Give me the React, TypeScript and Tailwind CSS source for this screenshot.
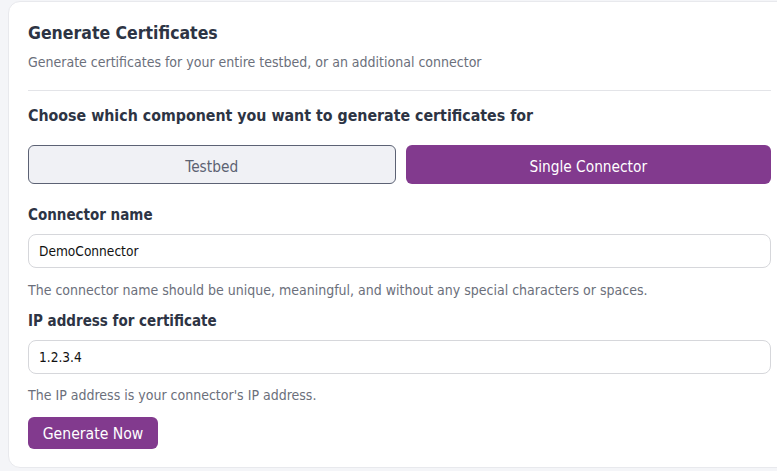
import React from "react";

const font = '"DejaVu Sans Condensed", "DejaVu Sans", sans-serif';

export default function App() {
  return (
    <div
      className="w-[777px] h-[471px] overflow-hidden bg-[#f4f5f8] pt-px pl-2"
      style={{ fontFamily: font }}
    >
      <div className="w-[783px] rounded-xl border border-[#e8e9ed] bg-white pl-[19px] pr-[19px] pt-[19px] pb-[18px] flex flex-col">
        <h1 className="text-[17.5px] leading-[24px] font-bold text-[#2d3444]">Generate Certificates</h1>
        <p className="mt-[7px] text-[14px] leading-[20px] text-[#6b6f7b]">
          Generate certificates for your entire testbed, or an additional connector
        </p>
        <div className="mt-[18px] h-px bg-[#e3e4e8]" />
        <h2 className="mt-[13px] text-[15.8px] leading-[24px] font-bold text-[#2d3444]">
          Choose which component you want to generate certificates for
        </h2>
        <div className="mt-[17px] flex gap-[10px]">
          <button className="flex-1 h-[39px] pt-[5px] flex items-center justify-center rounded-md border border-[#5c6274] bg-[#f0f1f5] text-[15.3px] text-[#5c6272]">
            Testbed
          </button>
          <button className="flex-1 h-[39px] pt-[5px] flex items-center justify-center rounded-md bg-[#823a8e] text-[15.3px] text-white">
            Single Connector
          </button>
        </div>
        <label className="mt-[20px] text-[15px] leading-[22px] font-bold text-[#2d3444]">Connector name</label>
        <div className="mt-[8px] h-[34px] rounded-lg border border-[#d6d7db] flex items-center px-[10px] text-[13.6px] text-[#111]">
          DemoConnector
        </div>
        <p className="mt-[12px] text-[14px] leading-[20px] text-[#6b6f7b]">
          The connector name should be unique, meaningful, and without any special characters or spaces.
        </p>
        <label className="mt-[10px] text-[15px] leading-[22px] font-bold text-[#2d3444]">IP address for certificate</label>
        <div className="mt-[8px] h-[34px] rounded-lg border border-[#d6d7db] flex items-center px-[10px] text-[13.6px] text-[#111]">
          1.2.3.4
        </div>
        <p className="mt-[11px] text-[14px] leading-[20px] text-[#6b6f7b]">
          The IP address is your connector's IP address.
        </p>
        <div className="mt-[12px]">
          <button className="h-[32px] w-[130px] pt-[4px] flex items-center justify-center rounded-md bg-[#823a8e] text-[15.6px] text-white">
            Generate Now
          </button>
        </div>
      </div>
    </div>
  );
}
